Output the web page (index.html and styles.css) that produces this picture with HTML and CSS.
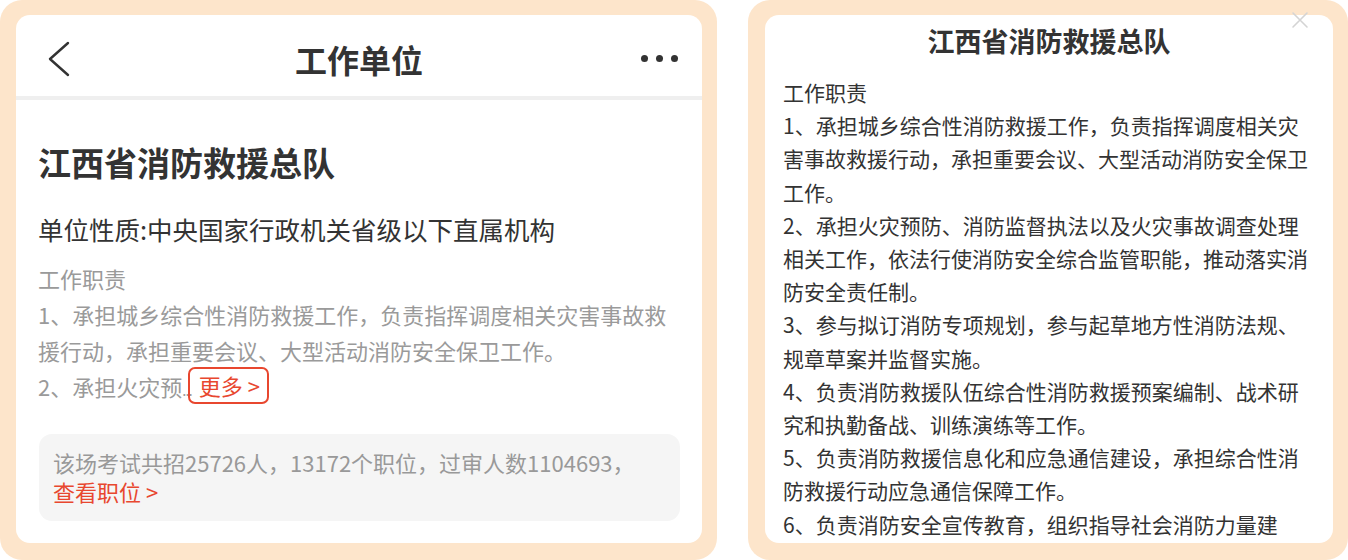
FILE: index.html
```html
<!DOCTYPE html>
<html lang="zh-CN">
<head>
<meta charset="utf-8">
<title>工作单位</title>
<link rel="stylesheet" href="styles.css">
</head>
<body>
<div class="stage">
  <section class="frame frame-left">
    <div class="card">
      <header class="nav">
        <svg class="back" width="24" height="36" viewBox="0 0 24 36" aria-hidden="true">
          <path d="M21 2 L3 18 L21 34" fill="none" stroke="#333" stroke-width="2.4" stroke-linecap="round" stroke-linejoin="round"/>
        </svg>
        <h1 class="nav-title">工作单位</h1>
        <div class="more-dots"><span></span><span></span><span></span></div>
      </header>
      <div class="content">
        <h2 class="unit-name">江西省消防救援总队</h2>
        <p class="unit-type">单位性质:中央国家行政机关省级以下直属机构</p>
        <div class="duty">
          <p>工作职责</p>
          <p>1、承担城乡综合性消防救援工作，负责指挥调度相关灾害事故救援行动，承担重要会议、大型活动消防安全保卫工作。</p>
          <p>2、承担火灾预<span class="ellipsis">...</span><span class="more-btn">更多 &gt;</span></p>
        </div>
        <div class="stats">
          <p>该场考试共招25726人，13172个职位，过审人数1104693，</p>
          <p class="link">查看职位 &gt;</p>
        </div>
      </div>
    </div>
  </section>
  <section class="frame frame-right">
    <div class="card card-right">
      <svg class="close" width="18" height="18" viewBox="0 0 18 18" aria-hidden="true">
        <path d="M2 2 L16 16 M16 2 L2 16" stroke="#d4d4d4" stroke-width="1.6" stroke-linecap="round"/>
      </svg>
      <h2 class="popup-title">江西省消防救援总队</h2>
      <div class="popup-body">
        <p>工作职责</p>
        <p>1、承担城乡综合性消防救援工作，负责指挥调度相关灾害事故救援行动，承担重要会议、大型活动消防安全保卫工作。</p>
        <p>2、承担火灾预防、消防监督执法以及火灾事故调查处理相关工作，依法行使消防安全综合监管职能，推动落实消防安全责任制。</p>
        <p>3、参与拟订消防专项规划，参与起草地方性消防法规、规章草案并监督实施。</p>
        <p>4、负责消防救援队伍综合性消防救援预案编制、战术研究和执勤备战、训练演练等工作。</p>
        <p>5、负责消防救援信息化和应急通信建设，承担综合性消防救援行动应急通信保障工作。</p>
        <p>6、负责消防安全宣传教育，组织指导社会消防力量建</p>
      </div>
    </div>
  </section>
</div>
</body>
</html>
```

FILE: styles.css
```css
* {
  box-sizing: border-box;
}

html, body {
  margin: 0;
  padding: 0;
  background: #ffffff;
}

body {
  font-family: "Noto Sans CJK SC", "Noto Sans", sans-serif;
  color: #333333;
}

p, h1, h2 {
  margin: 0;
}

.stage {
  display: flex;
  gap: 31px;
  width: 1348px;
  height: 560px;
  overflow: hidden;
}

.frame {
  background: #fde5cb;
  border-radius: 22px;
  height: 560px;
  padding: 15px 15px 17px 16px;
  display: flex;
}

.frame-left {
  width: 717px;
}

.frame-right {
  width: 600px;
  padding: 15px 15px 17px 17px;
}

.card {
  flex: 1;
  background: #ffffff;
  border-radius: 14px;
  overflow: hidden;
}

/* ---------- left card ---------- */

.nav {
  height: 85px;
  padding: 6px 24px 0 24px;
  display: flex;
  align-items: center;
  justify-content: space-between;
  border-bottom: 4px solid #efefef;
}

.back {
  display: block;
  margin-left: 7px;
}

.nav-title {
  font-size: 32px;
  font-weight: 700;
  line-height: 44px;
  color: #333333;
  margin-left: 6px;
}

.more-dots {
  display: flex;
  gap: 8px;
}

.more-dots span {
  width: 7px;
  height: 7px;
  border-radius: 50%;
  background: #333333;
}

.content {
  padding: 40px 22px 0 22px;
}

.unit-name {
  font-size: 33px;
  font-weight: 700;
  line-height: 44px;
  color: #333333;
}

.unit-type {
  margin-top: 27px;
  font-size: 25.5px;
  line-height: 36px;
  color: #333333;
}

.duty {
  margin-top: 13px;
  font-size: 22px;
  line-height: 36px;
  color: #9a9a9a;
}

.ellipsis {
  font-size: 15px;
  letter-spacing: -1px;
}

.more-btn {
  display: inline-block;
  margin-left: -4px;
  padding: 0 7px 0 9px;
  height: 37px;
  line-height: 33px;
  border: 2px solid #e8472f;
  border-radius: 7px;
  color: #e8472f;
  vertical-align: top;
  margin-top: -1px;
}

.stats {
  margin-top: 26px;
  margin-left: 1px;
  background: #f5f5f5;
  border-radius: 13px;
  padding: 14px 14px 15px 14px;
  font-size: 22px;
  line-height: 29px;
  color: #999999;
}

.stats .link {
  color: #e8472f;
}

/* ---------- right card ---------- */

.card-right {
  position: relative;
  overflow: visible;
  padding: 0 22px 0 18px;
}

.card-right > .popup-body {
  overflow: hidden;
  height: 464px;
}

.close {
  position: absolute;
  top: -4px;
  left: 526px;
}

.popup-title {
  padding-top: 6px;
  text-align: center;
  font-size: 27px;
  font-weight: 700;
  line-height: 40px;
  color: #333333;
  margin-left: 4px;
}

.popup-body {
  margin-top: 15px;
  font-size: 21px;
  line-height: 33.2px;
  color: #333333;
}
```
